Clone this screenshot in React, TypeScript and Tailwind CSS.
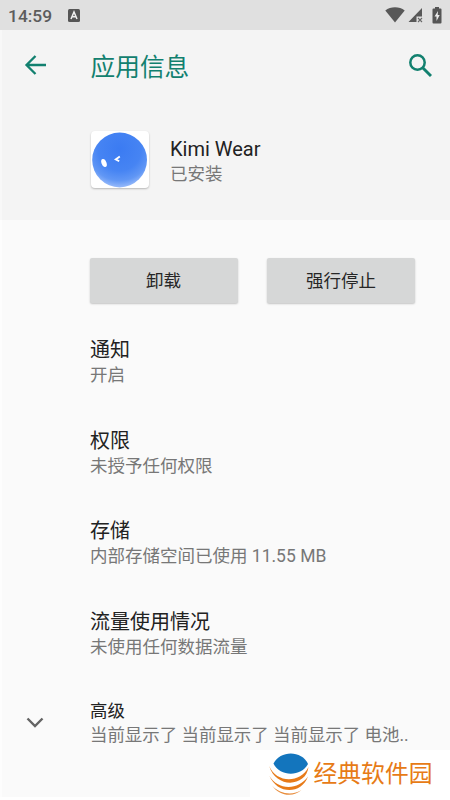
import React from 'react';

const rows = [
  { title: '通知', detail: '开启' },
  { title: '权限', detail: '未授予任何权限' },
  { title: '存储', detail: '内部存储空间已使用 11.55 MB' },
  { title: '流量使用情况', detail: '未使用任何数据流量' },
];

function StatusBar() {
  return (
    <div className="flex h-[30px] items-center bg-[#e0e0e0] pr-[8px] pl-[8px] text-[#5c5c5c]">
      <span className="w-[60px] pt-[1px] text-[17.4px] leading-[30px] font-medium">14:59</span>
      <svg width="12" height="13" viewBox="0 0 12 13" className="block">
        <rect width="12" height="13" rx="1.5" fill="#565656" />
        <path d="M3 10L6 3L9 10M4 7.7H8" fill="none" stroke="#f0f0f0" strokeWidth="1.5" />
      </svg>
      <div className="ml-auto flex items-center">
        <svg width="20" height="16" viewBox="0 0 20 16">
          <path d="M0.3 3.4C5.5-.8 14.500-.8 19.700 3.400L10 15.500Z" fill="#585858" />
        </svg>
        <svg width="15" height="16" viewBox="0 0 15 16" className="ml-[3px]">
          <path d="M14 1V9.500H8.500V15H0.500Z" fill="#585858" />
          <path d="M10 11L14 15M14 11L10 15" stroke="#686868" strokeWidth="1.1" />
        </svg>
        <svg width="10" height="17" viewBox="0 0 10 17" className="ml-[9px]">
          <path d="M3 0H7V1.500H8.500Q9.500 1.500 9.500 2.500V15.500Q9.500 16.500 8.500 16.500H1.500Q.5 16.500.5 15.500V2.500Q.5 1.500 1.500 1.500H3Z" fill="#555" />
          <path d="M6 4L2.500 9.500H4.500V14L7.700 8H5.700Z" fill="#ececec" />
        </svg>
      </div>
    </div>
  );
}

function AppIcon() {
  return (
    <div className="flex h-[57px] w-[58px] items-center justify-center rounded-[4px] bg-white shadow-[0_1px_2px_rgba(0,0,0,0.25)]">
      <svg width="56" height="56" viewBox="0 0 56 56">
        <defs>
          <radialGradient id="ball" cx="0.5" cy="0.3" r="0.72">
            <stop offset="0" stopColor="#3b7bf2" />
            <stop offset="0.55" stopColor="#4684f3" />
            <stop offset="0.8" stopColor="#6197f5" />
            <stop offset="1" stopColor="#a0c0fb" />
          </radialGradient>
        </defs>
        <circle cx="27.600" cy="28" r="27.400" fill="url(#ball)" />
        <ellipse cx="12" cy="31" rx="2.500" ry="4.200" fill="#fff" transform="rotate(-20 12 31)" />
        <path d="M27.800 24.500L23.700 27.400L27.200 29.300" fill="none" stroke="#fff" strokeWidth="1.8" />
      </svg>
    </div>
  );
}

function ActionButton({ label }: { label: string }) {
  return (
    <button className="h-[45px] w-[148px] rounded-[2px] bg-[#d6d7d7] pt-[1px] text-[17.500px] leading-[44px] text-[#262626] shadow-[0_1px_2px_rgba(0,0,0,0.22)]">
      {label}
    </button>
  );
}

function Watermark() {
  return (
    <div className="absolute top-[750px] left-[250px] flex h-[50px] w-[200px] items-start bg-white">
      <svg width="42" height="46" viewBox="0 0 42 46" className="mt-[3px] ml-[18px]">
        <path d="M5.500 10.500C12-3 34-3 40 11C33 24 12 24 5.500 10.500Z" fill="#1375bd" />
        <path d="M1.200 13C8 30 32 31 40.500 14C38 34 8 36 1.200 13Z" fill="#e77a18" />
        <path d="M1.300 22.500C9 37 30 38 40 23.500C33 42 9 41.500 1.300 22.500Z" fill="#e77a18" />
        <path d="M4 32.500C12 41.500 25 42.500 33.500 37C26 44 12 44 4 32.500Z" fill="#e88d3d" />
      </svg>
      <span className="ml-[3.500px] pt-[6px] text-[23.800px] leading-[36px] font-normal whitespace-nowrap text-[#e77b16]">
        经典软件园
      </span>
    </div>
  );
}

export default function App() {
  return (
    <div className="relative h-[800px] w-[450px] overflow-hidden bg-[#fafafa] font-[Roboto,'Noto_Sans_CJK_SC',sans-serif]">
      <StatusBar />
      <header className="h-[190px] border-l-2 border-[#f8f8f8] bg-[#f4f4f4]">
        <div className="flex h-[70px] items-center pr-[17px] pl-[22px]">
          <svg width="24" height="22" viewBox="0 0 24 22" fill="none" stroke="#12806f" strokeWidth="2.300">
            <path d="M22 11H3M11.500 2L2.500 11L11.500 20" />
          </svg>
          <h1 className="ml-[42.500px] pt-[5px] text-[24.700px] leading-[65px] text-[#12806f]">应用信息</h1>
          <svg width="25" height="25" viewBox="0 0 25 25" fill="none" stroke="#12806f" strokeWidth="2.500" className="ml-auto">
            <circle cx="9.500" cy="9.500" r="7.200" />
            <path d="M14.700 14.700L23 23" strokeWidth="2.900" />
          </svg>
        </div>
        <div className="flex items-center pt-[31px] pl-[89px]">
          <AppIcon />
          <div className="ml-[21px] pt-[2px]">
            <div className="text-[20px] leading-[26px] text-[#222]">Kimi Wear</div>
            <div className="text-[17.500px] leading-[24px] text-[#777]">已安装</div>
          </div>
        </div>
      </header>
      <main className="h-[577px] border-l-2 border-[#fdfdfd]">
        <div className="flex gap-[29.500px] pt-[37.500px] pl-[87.500px]">
          <ActionButton label="卸载" />
          <ActionButton label="强行停止" />
        </div>
        <div className="pt-[34.500px] pl-[88px]">
          {rows.map((row) => (
            <section key={row.title} className="h-[90.600px]">
              <h2 className="text-[20px] leading-[26px] text-[#222]">{row.title}</h2>
              <p className="text-[17.500px] leading-[24.500px] text-[#777]">{row.detail}</p>
            </section>
          ))}
        </div>
        <section className="flex">
          <svg width="18" height="12" viewBox="0 0 18 12" fill="none" stroke="#646464" strokeWidth="2.400" className="mt-[18px] ml-[24px]">
            <path d="M1.500 1.500L9 9L16.500 1.500" />
          </svg>
          <div className="ml-[46px]">
            <h2 className="text-[17.400px] leading-[25px] text-[#222]">高级</h2>
            <p className="text-[17.450px] leading-[23px] whitespace-nowrap text-[#777]">当前显示了 当前显示了 当前显示了 电池..</p>
          </div>
        </section>
      </main>
      <div className="h-[3px] bg-white" />
      <Watermark />
    </div>
  );
}
